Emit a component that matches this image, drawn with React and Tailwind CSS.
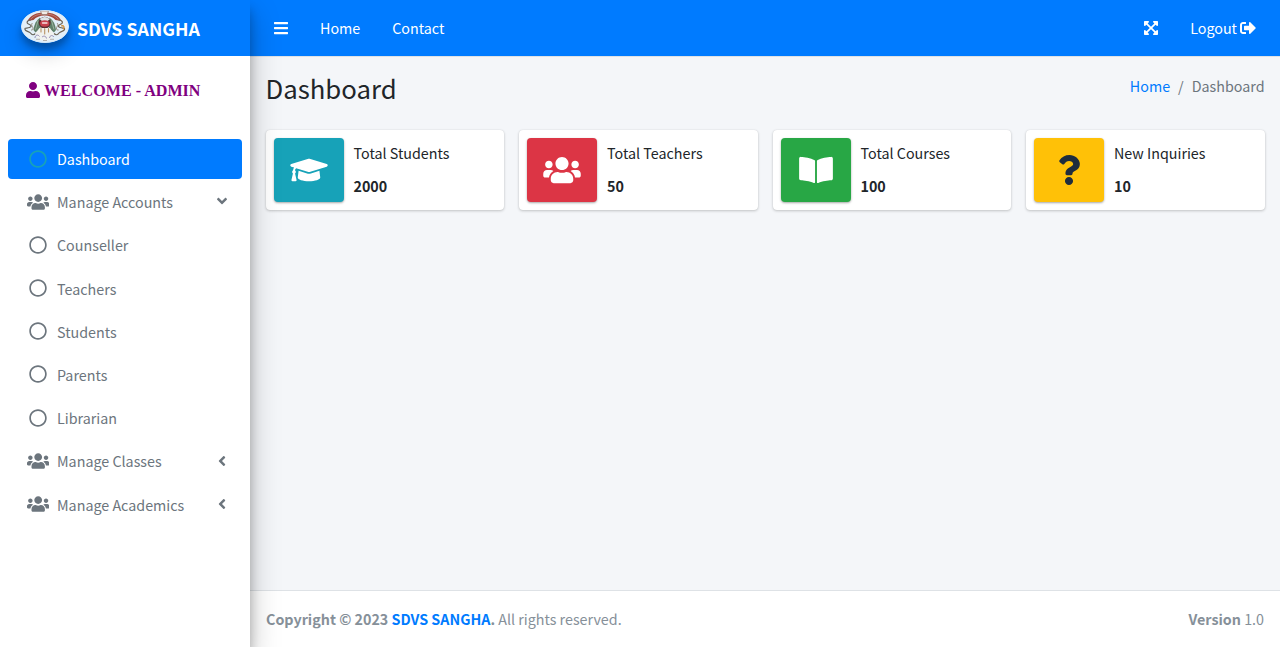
import React from "react";
import {
  FaAngleLeft, FaBars, FaBookOpen, FaExpandArrowsAlt, FaGraduationCap,
  FaQuestion, FaRegCircle, FaSignOutAlt, FaUser, FaUsers,
} from "react-icons/fa";

const navItems = [
  { label: "Dashboard", Icon: FaRegCircle, active: true },
  { label: "Manage Accounts", Icon: FaUsers, arrow: "open" },
  { label: "Counseller", Icon: FaRegCircle },
  { label: "Teachers", Icon: FaRegCircle },
  { label: "Students", Icon: FaRegCircle },
  { label: "Parents", Icon: FaRegCircle },
  { label: "Librarian", Icon: FaRegCircle },
  { label: "Manage Classes", Icon: FaUsers, arrow: "closed" },
  { label: "Manage Academics", Icon: FaUsers, arrow: "closed" },
];

const stats = [
  { label: "Total Students", value: "2000", Icon: FaGraduationCap, size: "h-[30px] w-[38px]", tone: "bg-[#17a2b8] text-white" },
  { label: "Total Teachers", value: "50", Icon: FaUsers, size: "h-[30px] w-[38px]", tone: "bg-[#dc3545] text-white" },
  { label: "Total Courses", value: "100", Icon: FaBookOpen, size: "h-[30px] w-[34px]", tone: "bg-[#28a745] text-white" },
  { label: "New Inquiries", value: "10", Icon: FaQuestion, size: "h-[30px] w-[30px]", tone: "bg-[#ffc107] text-[#1f2d3d]" },
];

function Logo() {
  return (
    <svg
      viewBox="0 0 48 33"
      className="h-[33px] w-12 shrink-0 rounded-[50%] shadow-[0_10px_20px_rgba(0,0,0,0.19),0_6px_6px_rgba(0,0,0,0.23)]"
    >
      <ellipse cx="24" cy="16.5" rx="24" ry="16.5" fill="#e3eff8" />
      <path d="M6.500 11C9 5 16 2.500 23.500 2.500S38 5 40.500 11l-6-1C32 7 28 5.500 23.500 5.500S15 7 12.500 10z" fill="#a34a3e" />
      <path d="M9.500 9.500c3-4 8-5.500 14-5.500s11 1.500 14 5.500" fill="none" stroke="#d3a494" strokeWidth=".6" />
      <path d="M19.500 1h8l-1.500 3.500h-5z" fill="#f1ece6" stroke="#8a6a5c" strokeWidth=".6" />
      <path d="M19 7.500c-4 3-6 7-6.500 12.500l2 2.500 5-4z" fill="#5f8069" />
      <path d="M28.500 7.500c4 3 6 7 6.500 12.500l-2 2.500-5-4z" fill="#5f8069" />
      <path d="M17 10.500l-2.500 9M30.500 10.500l2.500 9" stroke="#b8c9b9" strokeWidth=".7" />
      <circle cx="23.700" cy="12.800" r="6" fill="#5b2d30" />
      <path d="M19 9.500c1.500-3.500 8-3.500 9.500 0l-2 1.500h-5.500z" fill="#dfe6e8" />
      <ellipse cx="23.700" cy="13.500" rx="4.600" ry="3.200" fill="#c8404d" />
      <path d="M21.500 13h4.500" stroke="#f6dfe0" strokeWidth="1.300" strokeLinecap="round" />
      <path d="M10 10c-4 0-5 3-2.500 4s4 2.500 1 3.500-5 0-4.500 2 4 1.500 5.500 3.500 3 2.500 5 .5" fill="none" stroke="#66635a" strokeWidth="1.200" />
      <path d="M37.500 10c4 0 5 3 2.500 4s-4 2.500-1 3.500 5 0 4.500 2-4 1.500-5.500 3.500-3 2.500-5 .5" fill="none" stroke="#6d6252" strokeWidth="1.200" />
      <path d="M11.500 13c-2 2 0 3 .5 5s-1 2-2 2M36 13c2 2 0 3-.5 5s1 2 2 2" fill="none" stroke="#8b8070" strokeWidth=".9" />
      <path d="M40 16c3-1 4 1.500 2 3" fill="none" stroke="#d0903c" strokeWidth="1.300" />
      <path d="M18.500 18h10.500l4 6-4 6H18l-4-6z" fill="#f1f2ef" />
      <path d="M20 18.500v3.500M23.700 18.500v5.500M27.500 18.500v3.500" stroke="#b99365" strokeWidth="1.100" strokeLinecap="round" />
      <path d="M14 28c0-3 3-4 4.500-1.500M21 27c2-1.500 4-1 4.500 1.500M28.500 28c.5-3 3-3 4.500-1" fill="none" stroke="#8379aa" strokeWidth=".8" />
      <path d="M15 29.300h4M22 30.500h4M29 29.300h4" stroke="#a4988d" strokeWidth=".7" />
      <ellipse cx="24" cy="16.500" rx="23.600" ry="16.100" fill="none" stroke="#cfe4f7" strokeWidth=".8" />
    </svg>
  );
}

function NavItem({ label, Icon, active, arrow }) {
  return (
    <li className="mb-[3.2px]">
      <a
        className={
          "flex h-10 items-center rounded pl-[17px] pr-4 " +
          (active ? "bg-[#007bff] text-white" : "text-[#6c757d]")
        }
      >
        <span className={"mr-[6px] flex w-[26px] justify-center pb-px " + (active ? "text-[#17a2b8]" : "")}>
          <Icon className={Icon === FaUsers ? "h-[18px] w-[22.4px] shrink-0" : "h-[18px] w-[18px] shrink-0"} />
        </span>
        <span className="grow">{label}</span>
        {arrow && <FaAngleLeft className={"text-[16px] -mr-1 " + (arrow === "open" ? "mb-0.5 -rotate-90" : "mb-px")} />}
      </a>
    </li>
  );
}

export default function App() {
  return (
    <div className="flex h-[647px] w-full overflow-hidden bg-[#f4f6f9] font-['Noto_Sans_CJK_JP','Open_Sans',sans-serif] text-[14.3px] leading-6 text-[#212529]">
      <aside className="relative z-10 flex w-[250px] shrink-0 flex-col bg-white shadow-[0_14px_28px_rgba(0,0,0,0.25),0_10px_10px_rgba(0,0,0,0.22)]">
        <div className="flex h-14 shrink-0 items-center bg-[#007bff] pb-[3px] pl-[21px]">
          <Logo />
          <span className="ml-2 pt-0.5 text-[17.8px] font-bold text-white">SDVS SANGHA</span>
        </div>
        <div className="mt-[22px] flex h-6 items-center pl-[26px] text-[#800080]">
          <FaUser className="mr-1 h-4 w-[14px]" />
          <span className="pt-[2px] font-['Liberation_Serif',serif] text-[16.1px] font-bold">WELCOME - ADMIN</span>
        </div>
        <ul className="mt-[37px] px-2">
          {navItems.map((item) => <NavItem key={item.label} {...item} />)}
        </ul>
      </aside>

      <div className="flex min-w-0 grow flex-col">
        <nav className="flex h-[57px] shrink-0 items-center justify-between border-b border-[#dee2e6] bg-[#007bff] px-6 text-white">
          <div className="flex items-center">
            <FaBars className="h-4 w-[14px]" />
            <a className="ml-8">Home</a>
            <a className="ml-8">Contact</a>
          </div>
          <div className="flex items-center">
            <FaExpandArrowsAlt className="mr-8 h-4 w-[14px]" />
            <a className="flex items-center">Logout <FaSignOutAlt className="ml-[3px] text-[16px]" /></a>
          </div>
        </nav>

        <main className="grow px-[15.5px]">
          <header className="flex justify-between pt-[13px]">
            <h1 className="text-[25.74px] leading-[35px]">Dashboard</h1>
            <div className="flex gap-2 pt-1">
              <a className="text-[#007bff]">Home</a>
              <span className="text-[#6c757d]">/</span>
              <span className="text-[#6c757d]">Dashboard</span>
            </div>
          </header>
          <section className="mt-[25px] grid grid-cols-4 gap-[15px]">
            {stats.map(({ label, value, Icon, size, tone }) => (
              <div key={label} className="flex h-20 rounded bg-white p-2 shadow-[0_0_1px_rgba(0,0,0,0.125),0_1px_3px_rgba(0,0,0,0.2)]">
                <div className={"flex w-[70px] items-center justify-center rounded shadow-[0_1px_3px_rgba(0,0,0,0.12),0_1px_2px_rgba(0,0,0,0.24)] " + tone}>
                  <Icon className={size} />
                </div>
                <div className="flex flex-col pl-[10px] pt-[3px]">
                  <span>{label}</span>
                  <span className="mt-[9px] font-bold">{value}</span>
                </div>
              </div>
            ))}
          </section>
        </main>

        <footer className="flex h-[57px] shrink-0 items-center justify-between border-t border-[#dee2e6] bg-white px-4 text-[#869099]">
          <div>
            <b>Copyright © 2023 <a className="text-[#007bff]">SDVS SANGHA</a>.</b> All rights reserved.
          </div>
          <div><b>Version</b> 1.0</div>
        </footer>
      </div>
    </div>
  );
}
